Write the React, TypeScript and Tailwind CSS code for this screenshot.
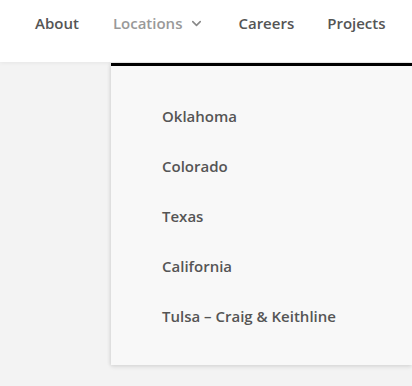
import { ChevronDown } from "lucide-react"

const locations = ["Oklahoma", "Colorado", "Texas", "California", "Tulsa – Craig & Keithline"]

export default function App() {
  return (
    <div
      className="relative w-[412px] h-[386px] overflow-hidden bg-[#f3f3f3]"
      style={{ fontFamily: '"Open Sans", "Noto Sans", sans-serif' }}
    >
      {/* top nav */}
      <nav className="relative z-10 h-[62px] bg-white flex items-center pb-[16px] pl-[18px] text-[15px] font-semibold shadow-[0_1px_4px_rgba(0,0,0,0.06)]">
        <a className="px-[17px] text-[#555]">About</a>
        <a className="px-[17px] text-[#999] flex items-center gap-[7px]">
          Locations
          <ChevronDown size={15} strokeWidth={2.5} className="text-[#888]" />
        </a>
        <a className="pl-[17px] pr-[16px] text-[#555]">Careers</a>
        <a className="px-[17px] text-[#555]">Projects</a>
      </nav>

      {/* dropdown */}
      <div className="absolute z-20 left-[111px] top-[63px] w-[301px] h-[302px] bg-[#f8f8f8] border-t-[3px] border-black shadow-[0_2px_4px_rgba(0,0,0,0.1),-2px_0_3px_rgba(0,0,0,0.05)]">
        <ul className="pt-[25px] pl-[51px] text-[15px] font-semibold text-[#555]">
          {locations.map((loc) => (
            <li key={loc} className="h-[50px] flex items-center">
              {loc}
            </li>
          ))}
        </ul>
      </div>
    </div>
  )
}
